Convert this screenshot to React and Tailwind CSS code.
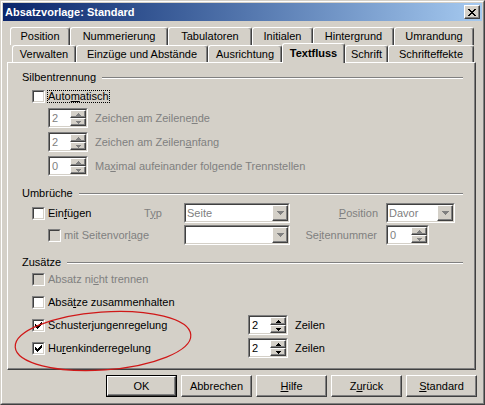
import React from "react";

// Classic 3D edges
const SUNKEN_OUT = "border border-t-[#808080] border-l-[#808080] border-r-white border-b-white";
const SUNKEN_IN = "border border-t-[#404040] border-l-[#404040] border-r-[#d4d0c8] border-b-[#d4d0c8]";
const RAISED = "border border-t-white border-l-white border-r-[#404040] border-b-[#404040] shadow-[inset_-1px_-1px_0_#808080]";

function Pixels({ rows, color }) {
  const w = rows[0].length;
  const h = rows.length;
  return (
    <svg width={w} height={h} viewBox={`0 0 ${w} ${h}`} shapeRendering="crispEdges" className="block">
      {rows.flatMap((r, y) =>
        [...r].map((c, x) =>
          c === "#" ? <rect key={`${x}-${y}`} x={x} y={y} width="1" height="1" fill={color} /> : null
        )
      )}
    </svg>
  );
}

const CLOSE_X = ["##....##", ".##..##.", "..####..", "...##...", "..####..", ".##..##.", "##....##"];
const CHECK = ["......#", ".....##", "#...###", "##.###.", "#####..", ".###...", "..#...."];
const ARROW_UP = ["..#..", ".###.", "#####"];
const ARROW_DOWN = ["#####", ".###.", "..#.."];
const COMBO_DOWN = ["#######", ".#####.", "..###..", "...#..."];

function Check({ checked, disabled }) {
  return (
    <div className={`w-[13px] h-[13px] shrink-0 ${SUNKEN_OUT}`}>
      <div className={`w-full h-full flex items-center justify-center ${SUNKEN_IN} ${disabled ? "bg-[#d4d0c8]" : "bg-white"}`}>
        {checked && <Pixels rows={CHECK} color="#000" />}
      </div>
    </div>
  );
}

function SpinBtn({ rows, disabled }) {
  return (
    <div className={`h-[8px] flex items-center justify-center bg-[#d4d0c8] ${RAISED}`}>
      <Pixels rows={rows} color={disabled ? "#808080" : "#000"} />
    </div>
  );
}

function Spin({ value, w, disabled }) {
  return (
    <div className={`${w} h-[20px] shrink-0 ${SUNKEN_OUT}`}>
      <div className={`h-full flex bg-white ${SUNKEN_IN}`}>
        <span className={`flex-1 pl-[2px] leading-[16px] ${disabled ? "text-[#808080]" : "text-black"}`}>{value}</span>
        <div className="w-[16px] flex flex-col">
          <SpinBtn rows={ARROW_UP} disabled={disabled} />
          <SpinBtn rows={ARROW_DOWN} disabled={disabled} />
        </div>
      </div>
    </div>
  );
}

function Combo({ value, w }) {
  return (
    <div className={`${w} h-[20px] shrink-0 ${SUNKEN_OUT}`}>
      <div className={`h-full flex bg-white ${SUNKEN_IN}`}>
        <span className="flex-1 pl-[1px] leading-[16px] text-[#808080]">{value}</span>
        <div className={`w-[16px] h-full flex items-center justify-center bg-[#d4d0c8] ${RAISED}`}>
          <Pixels rows={COMBO_DOWN} color="#808080" />
        </div>
      </div>
    </div>
  );
}

function Heading({ children, mt }) {
  return (
    <div className={`flex items-center h-[13px] pl-[14px] pr-[12px] ${mt}`}>
      <span>{children}</span>
      <div className="flex-1 ml-[6px] h-[2px] border-t border-t-[#808080] border-b border-b-white" />
    </div>
  );
}

function Tab({ children, w, active }) {
  if (active) {
    return (
      <div className={`${w} relative z-10 h-[20px] mb-[-1px] pb-[1px] bg-[#d4d0c8] border-t border-l border-r border-t-white border-l-white border-r-[#404040] rounded-t-[3px] shadow-[inset_-1px_0_0_#808080] flex items-center justify-center font-bold`}>
        {children}
      </div>
    );
  }
  return (
    <div className={`${w} h-full bg-[#d4d0c8] border-t border-l border-r border-t-white border-l-white border-r-[#404040] rounded-t-[3px] shadow-[inset_-1px_0_0_#808080] flex items-center justify-center`}>
      {children}
    </div>
  );
}

function Btn({ children, isDefault }) {
  const face = <div className={`h-full flex items-center justify-center bg-[#d4d0c8] ${RAISED}`}>{children}</div>;
  return isDefault ? (
    <div className="w-[71px] h-[22px] border border-black">{face}</div>
  ) : (
    <div className="w-[71px] h-[22px]">{face}</div>
  );
}

export default function App() {
  return (
    <div className="relative w-[485px] h-[405px] bg-[#d4d0c8] text-[11px] leading-[13px] text-black font-['Liberation_Sans',Arial,sans-serif] border border-t-[#d4d0c8] border-l-[#d4d0c8] border-r-[#404040] border-b-[#404040]">
      <div className="h-full flex flex-col p-[1px] border border-t-white border-l-white border-r-[#808080] border-b-[#808080]">
        {/* caption */}
        <div className="h-[18px] shrink-0 flex items-center justify-between bg-linear-to-r from-[#0a246a] to-[#a6caf0]">
          <span className="pl-[2px] font-bold text-white">Absatzvorlage: Standard</span>
          <div className={`w-[16px] h-[14px] mr-[2px] flex items-center justify-center bg-[#d4d0c8] ${RAISED}`}>
            <Pixels rows={CLOSE_X} color="#000" />
          </div>
        </div>

        {/* tab rows */}
        <div className="mt-[6px] h-[18px] flex pl-[7px]">
          <Tab w="w-[60px]">Position</Tab>
          <Tab w="w-[98px]">Nummerierung</Tab>
          <Tab w="w-[84px]">Tabulatoren</Tab>
          <Tab w="w-[61px]">Initialen</Tab>
          <Tab w="w-[81px]">Hintergrund</Tab>
          <Tab w="w-[80px]">Umrandung</Tab>
        </div>
        <div className="h-[17px] flex items-end pl-[9px]">
          <Tab w="w-[64px]">Verwalten</Tab>
          <Tab w="w-[132px]">Einzüge und Abstände</Tab>
          <Tab w="w-[74px]">Ausrichtung</Tab>
          <Tab w="w-[63px]" active>Textfluss</Tab>
          <Tab w="w-[43px]">Schrift</Tab>
          <Tab w="w-[86px]">Schrifteffekte</Tab>
        </div>

        {/* page */}
        <div className="ml-[4px] w-[469px] h-[308px] shrink-0 flex flex-col border border-t-white border-l-white border-r-[#404040] border-b-[#404040] shadow-[inset_-1px_-1px_0_#808080]">
          <Heading mt="mt-[8px]">Silbentrennung</Heading>
          <div className="mt-[6px] h-[13px] flex items-center pl-[24px]">
            <Check />
            <span className="ml-[2px] border border-dotted border-black leading-[11px]">
              Auto<u>m</u>atisch
            </span>
          </div>
          <div className="mt-[5px] h-[20px] flex items-center pl-[40px]">
            <Spin w="w-[40px]" value="2" disabled />
            <span className="ml-[7px] text-[#808080]">Zeichen am Zeilene<u>n</u>de</span>
          </div>
          <div className="mt-[4px] h-[20px] flex items-center pl-[40px]">
            <Spin w="w-[40px]" value="2" disabled />
            <span className="ml-[7px] text-[#808080]">Zeichen am Zeilen<u>a</u>nfang</span>
          </div>
          <div className="mt-[4px] h-[20px] flex items-center pl-[40px]">
            <Spin w="w-[40px]" value="0" disabled />
            <span className="ml-[7px] text-[#808080]">Ma<u>x</u>imal aufeinander folgende Trennstellen</span>
          </div>

          <Heading mt="mt-[11px]">Umbrüche</Heading>
          <div className="mt-[3px] h-[20px] flex items-center">
            <div className="w-[136px] pl-[24px] flex items-center">
              <Check />
              <span className="ml-[3px]">Ein<u>f</u>ügen</span>
            </div>
            <span className="w-[40px] text-[#808080]">T<u>y</u>p</span>
            <Combo w="w-[106px]" value="Seite" />
            <span className="w-[96px] pr-[8px] text-right text-[#808080]"><u>P</u>osition</span>
            <Combo w="w-[69px]" value="Davor" />
          </div>
          <div className="mt-[2px] h-[20px] flex items-center">
            <div className="w-[176px] pl-[40px] flex items-center">
              <Check disabled />
              <span className="ml-[3px] text-[#808080]">mit Seitenvor<u>l</u>age</span>
            </div>
            <Combo w="w-[106px]" value="" />
            <span className="w-[96px] pr-[9px] text-right text-[#808080]">Se<u>i</u>tennummer</span>
            <Spin w="w-[43px]" value="0" disabled />
          </div>

          <Heading mt="mt-[11px]">Zusätze</Heading>
          <div className="mt-[4px] h-[13px] flex items-center pl-[24px]">
            <Check disabled />
            <span className="ml-[3px] text-[#808080]">Absatz ni<u>c</u>ht trennen</span>
          </div>
          <div className="mt-[10px] h-[13px] flex items-center pl-[24px]">
            <Check />
            <span className="ml-[3px]">Absä<u>t</u>ze zusammenhalten</span>
          </div>
          <div className="mt-[6px] h-[20px] flex items-center">
            <div className="w-[240px] pl-[24px] flex items-center">
              <Check checked />
              <span className="ml-[3px]">Schuster<u>j</u>ungenregelung</span>
            </div>
            <Spin w="w-[40px]" value="2" />
            <span className="ml-[7px]">Zeilen</span>
          </div>
          <div className="mt-[3px] h-[20px] flex items-center">
            <div className="w-[240px] pl-[24px] flex items-center">
              <Check checked />
              <span className="ml-[3px]">Hu<u>r</u>enkinderregelung</span>
            </div>
            <Spin w="w-[40px]" value="2" />
            <span className="ml-[7px]">Zeilen</span>
          </div>
        </div>

        {/* dialog buttons */}
        <div className="mt-[5px] flex gap-[4px] pl-[103px]">
          <Btn isDefault>OK</Btn>
          <Btn>Abbrechen</Btn>
          <Btn><u>H</u>ilfe</Btn>
          <Btn>Z<u>u</u>rück</Btn>
          <Btn><u>S</u>tandard</Btn>
        </div>
      </div>

      {/* hand-drawn red marking around the two last options */}
      <svg className="absolute inset-0 pointer-events-none" width="485" height="405">
        <ellipse cx="102" cy="340" rx="88" ry="29" transform="rotate(-4 102 340)" fill="none" stroke="#d01818" strokeWidth="1.2" />
      </svg>
    </div>
  );
}
